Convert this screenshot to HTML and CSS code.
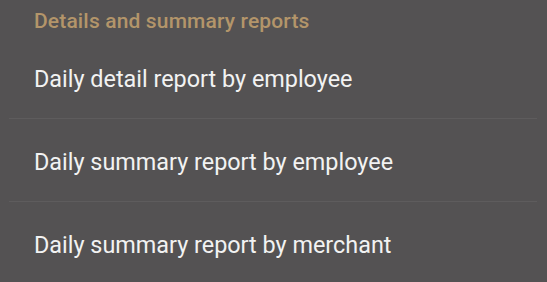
FILE: index.html
```html
<!DOCTYPE html>
<html>
<head>
<meta charset="utf-8">
<link rel="stylesheet" href="styles.css">
</head>
<body>
<div class="screen">
  <div class="section-title">Details and summary reports</div>
  <ul class="list">
    <li class="item">Daily detail report by employee</li>
    <li class="item">Daily summary report by employee</li>
    <li class="item">Daily summary report by merchant</li>
  </ul>
</div>
</body>
</html>
```
FILE: styles.css
```css
html, body {
  margin: 0;
  padding: 0;
  background: #545253;
}
.screen {
  width: 547px;
  height: 282px;
  overflow: hidden;
  font-family: Roboto, "Liberation Sans", sans-serif;
}
.section-title {
  height: 36px;
  box-sizing: border-box;
  padding: 9px 0 0 34px;
  font-size: 21px;
  line-height: 24px;
  font-weight: 500;
  letter-spacing: 0.15px;
  color: #b3956a;
}
.list {
  list-style: none;
  margin: 0 10px 0 9px;
  padding: 0;
}
.item {
  height: 83px;
  box-sizing: border-box;
  padding: 3px 0 0 25px;
  display: flex;
  align-items: center;
  font-size: 23.4px;
  color: #f2f2f2;
  border-bottom: 1px solid #5e5c5d;
}
```
